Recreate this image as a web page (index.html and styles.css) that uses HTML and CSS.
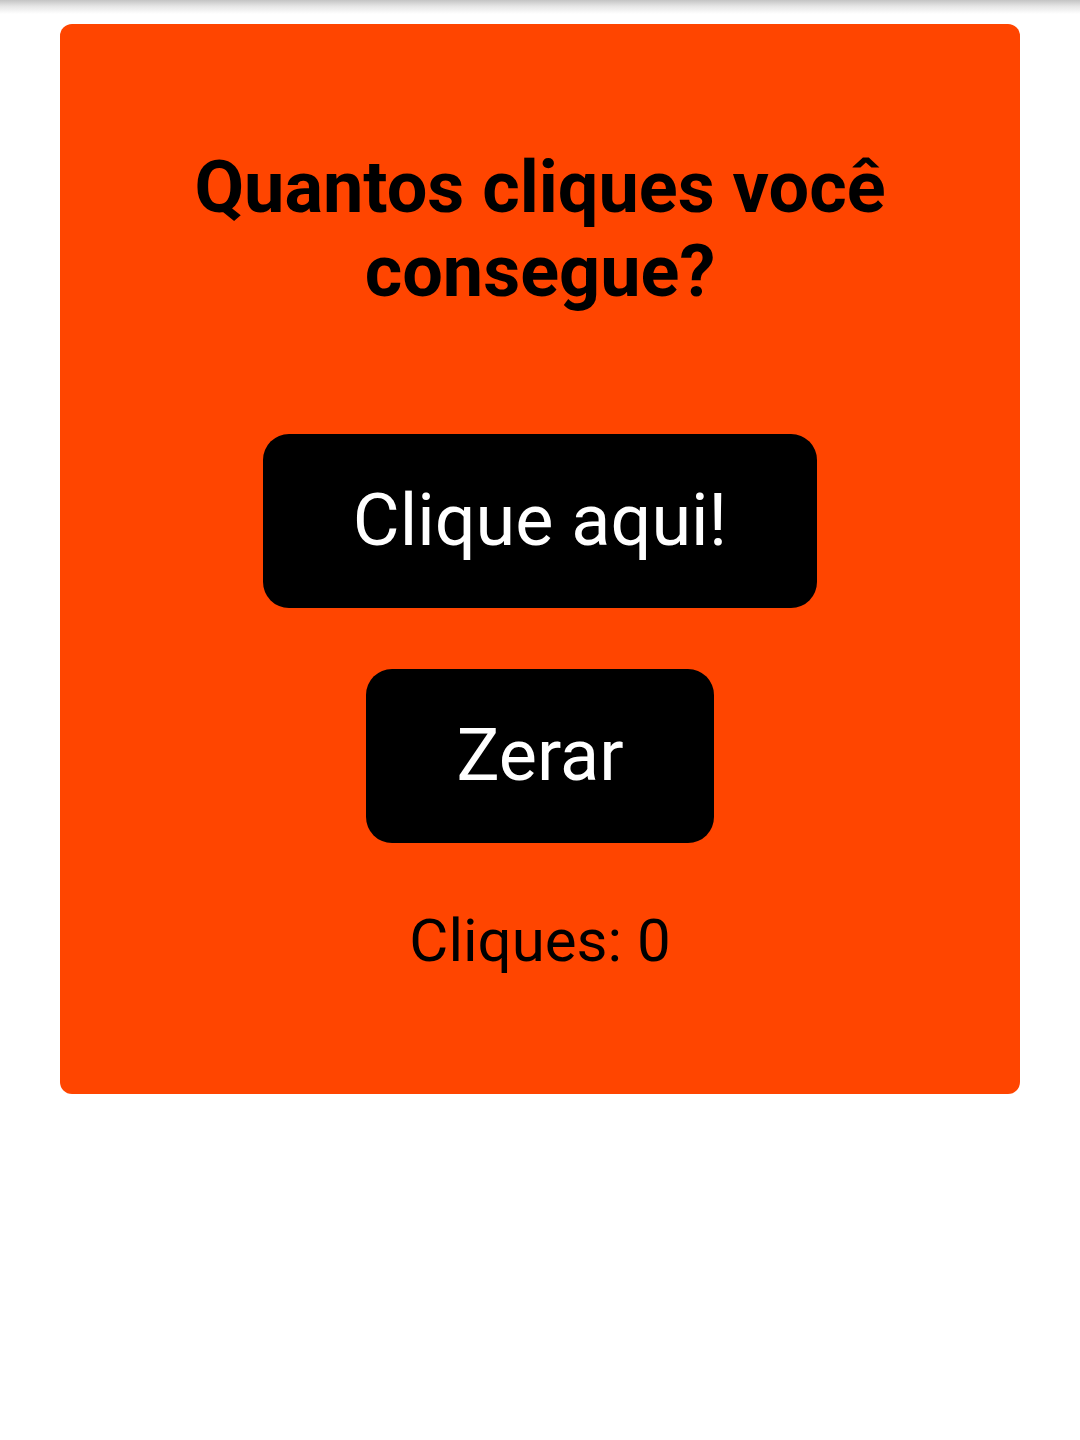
FILE: index.html
```html
<!DOCTYPE html>
<html lang="pt">
<head>
<meta charset="utf-8">
<link rel="stylesheet" href="styles.css">
</head>
<body>
<div class="topshade"></div>
<main class="card">
  <h1 class="title">Quantos cliques você consegue?</h1>
  <button class="btn btn-main">Clique aqui!</button>
  <button class="btn btn-reset">Zerar</button>
  <p class="count">Cliques: 0</p>
</main>
</body>
</html>
```

FILE: styles.css
```css
html, body {
  margin: 0;
  padding: 0;
  background: #ffffff;
}
body {
  font-family: Roboto, "Liberation Sans", sans-serif;
}
.topshade {
  height: 14px;
  background: linear-gradient(to bottom, #c4c4c4 0%, #e6e6e6 45%, #ffffff 100%);
}
.card {
  margin: 10px 60px 0 60px;
  height: 1070px;
  box-sizing: border-box;
  background: #ff4500;
  border-radius: 12px;
  display: flex;
  flex-direction: column;
  align-items: center;
  padding-top: 122px;
}
.title {
  margin: 0;
  width: 720px;
  text-align: center;
  font-size: 72px;
  font-weight: 700;
  line-height: 84px;
  color: #000;
}
.btn {
  border: none;
  background: #000;
  color: #fff;
  font-family: Roboto, "Liberation Sans", sans-serif;
  font-size: 72px;
  line-height: 84px;
  padding: 45px 0;
  border-radius: 26px;
  cursor: pointer;
}
.btn-main {
  margin-top: 120px;
  width: 554px;
}
.btn-reset {
  margin-top: 61px;
  width: 348px;
}
.count {
  margin: 63px 0 0 0;
  font-size: 60px;
  line-height: 70px;
  color: #000;
}
```
